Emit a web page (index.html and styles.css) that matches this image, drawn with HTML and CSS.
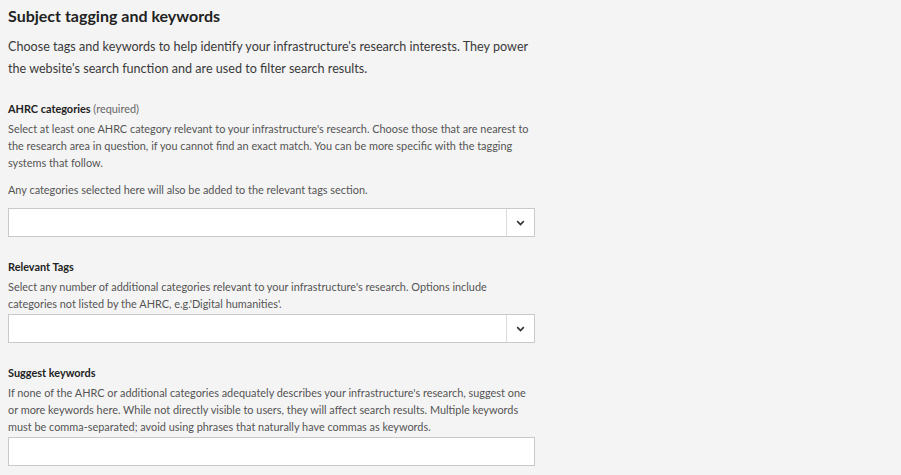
FILE: index.html
```html
<!DOCTYPE html>
<html lang="en">
<head>
<meta charset="utf-8">
<title>Subject tagging and keywords</title>
<link rel="stylesheet" href="styles.css">
</head>
<body>
<main class="form">
  <h2 class="title">Subject tagging and keywords</h2>
  <p class="intro">Choose tags and keywords to help identify your infrastructure's research interests. They power the website's search function and are used to filter search results.</p>

  <section class="field field-first">
    <div class="label"><b>AHRC categories</b> <span class="req">(required)</span></div>
    <p class="help">Select at least one AHRC category relevant to your infrastructure's research. Choose those that are nearest to the research area in question, if you cannot find an exact match. You can be more specific with the tagging systems that follow.</p>
    <p class="help help-gap">Any categories selected here will also be added to the relevant tags section.</p>
    <div class="select select-gap">
      <div class="select-value"></div>
      <div class="select-btn">
        <svg width="9" height="6" viewBox="0 0 9 6"><path d="M1.2 1.2 L4.5 4.5 L7.8 1.2" fill="none" stroke="#333" stroke-width="1.7"/></svg>
      </div>
    </div>
  </section>

  <section class="field">
    <div class="label"><b>Relevant Tags</b></div>
    <p class="help">Select any number of additional categories relevant to your infrastructure's research. Options include categories not listed by the AHRC, e.g.'Digital humanities'.</p>
    <div class="select">
      <div class="select-value"></div>
      <div class="select-btn">
        <svg width="9" height="6" viewBox="0 0 9 6"><path d="M1.2 1.2 L4.5 4.5 L7.8 1.2" fill="none" stroke="#333" stroke-width="1.7"/></svg>
      </div>
    </div>
  </section>

  <section class="field">
    <div class="label"><b>Suggest keywords</b></div>
    <p class="help">If none of the AHRC or additional categories adequately describes your infrastructure's research, suggest one or more keywords here. While not directly visible to users, they will affect search results. Multiple keywords must be comma-separated; avoid using phrases that naturally have commas as keywords.</p>
    <div class="input"></div>
  </section>
</main>
</body>
</html>
```

FILE: styles.css
```css
html, body {
  margin: 0;
  padding: 0;
  background: #f4f4f4;
}
body {
  font-family: Lato, "Noto Sans", sans-serif;
  color: #333;
  width: 901px;
  height: 475px;
  overflow: hidden;
}
.form {
  width: 527px;
  padding: 6px 0 0 8px;
}
.title {
  margin: 0;
  font-size: 16px;
  font-weight: 700;
  color: #222;
  line-height: 20px;
}
.intro {
  margin: 10px 0 0 0;
  width: 527px;
  font-size: 12.6px;
  line-height: 22px;
  color: #3a3a3a;
}
.field {
  margin-top: 21px;
}
.field-first {
  margin-top: 20px;
}
.label {
  font-size: 10.9px;
  line-height: 17px;
  color: #222;
}
.req {
  color: #666;
}
.help {
  margin: 3px 0 0 0;
  font-size: 10.9px;
  line-height: 17px;
  color: #555;
}
.help-gap {
  margin-top: 10px;
}
.select {
  margin-top: 2px;
  display: flex;
  height: 29px;
  box-sizing: border-box;
  border: 1px solid #c9c9c9;
  background: #fff;
}
.select.select-gap {
  margin-top: 10px;
}
.select-value {
  flex: 1;
}
.select-btn {
  width: 27px;
  border-left: 1px solid #dcdcdc;
  display: flex;
  align-items: center;
  justify-content: center;
}
.input {
  margin-top: 2px;
  height: 29px;
  box-sizing: border-box;
  border: 1px solid #c9c9c9;
  background: #fff;
}
```
